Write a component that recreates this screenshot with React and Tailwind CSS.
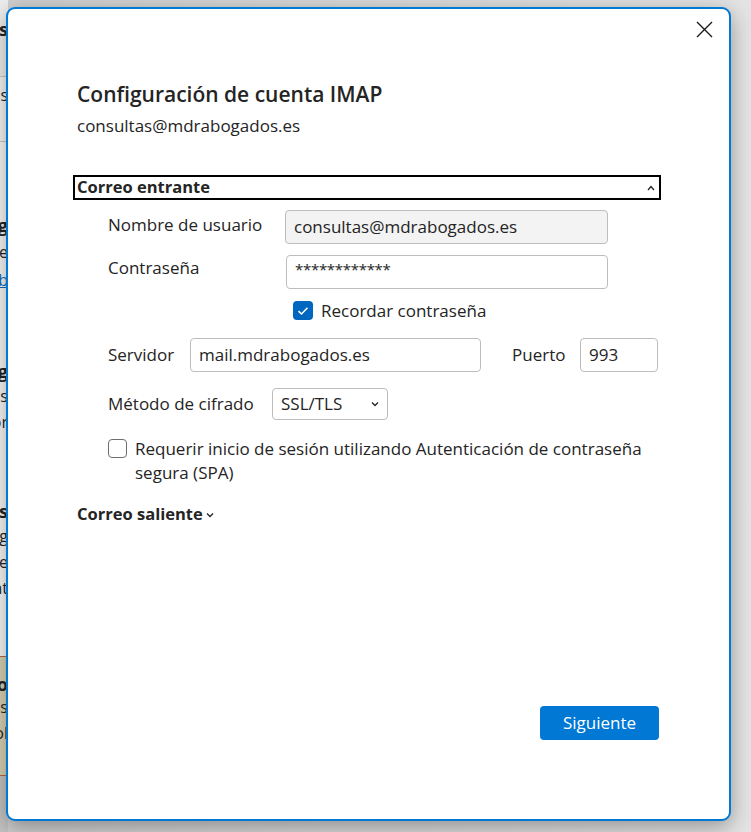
import React from 'react';

const font = { fontFamily: '"Open Sans", "Noto Sans", sans-serif' };

// Thin slice of the window behind the dialog (only its right edge shows)
function Backdrop() {
  const Row = ({ h, children, cls = '' }) => (
    <div className={`flex justify-end overflow-hidden whitespace-nowrap ${h} ${cls}`}>{children}</div>
  );
  return (
    <div className="absolute left-0 top-0 w-[8px] h-[832px] flex flex-col text-[16px] text-[#242424] overflow-hidden" style={font}>
      <div className="bg-[#eeeeee] h-[77px] pt-[16px] border-b border-[#c8c8c8]">
        <Row h="h-[24px]" cls="font-bold text-[18px]">Cuentas</Row>
      </div>
      <div className="bg-[#f5f5f5] h-[65px] pt-[6px] border-b border-[#c8c8c8]">
        <Row h="h-[24px]">Cuentas</Row>
      </div>
      <div className="bg-[#f7f7f7] flex-1 flex flex-col">
        <Row h="h-[24px] mt-[70px]" cls="font-bold text-[18px]">Config</Row>
        <Row h="h-[24px] mt-[4px]">Agregue</Row>
        <Row h="h-[24px] mt-[4px]" cls="text-[#0f6cbd] underline">web</Row>
        <Row h="h-[24px] mt-[66px]" cls="font-bold text-[18px]">Config</Row>
        <Row h="h-[24px] mt-[2px]">visis</Row>
        <Row h="h-[24px] mt-[2px]">ador</Row>
        <Row h="h-[24px] mt-[64px]" cls="font-bold text-[18px]">Cuentas</Row>
        <Row h="h-[24px] mt-[2px]" cls="underline">Config</Row>
        <Row h="h-[24px] mt-[2px]">sece</Row>
        <Row h="h-[24px] mt-[2px]">ant</Row>
      </div>
      <div className="bg-[#d8d2b4] h-[120px] border-t border-b border-[#b86a3c] pt-[14px]">
        <Row h="h-[24px]" cls="font-bold text-[18px]">Info</Row>
        <Row h="h-[26px]">visis</Row>
        <Row h="h-[26px]">sol</Row>
      </div>
      <div className="bg-[#c4c4c4] h-[56px]" />
    </div>
  );
}

function Input({ value, w, gray = false, h = 'h-[34px]' }) {
  return (
    <div className={`${w} ${h} rounded-[4px] border border-[#bdbdbd] flex items-center px-[8px] text-[17px] text-[#242424] ${gray ? 'bg-[#f3f3f3]' : 'bg-white'}`}>
      {value}
    </div>
  );
}

export default function App() {
  return (
    <div className="relative w-[751px] h-[832px] overflow-hidden bg-[linear-gradient(90deg,#cfcfcf,#e4e4e4)]" style={font}>
      <Backdrop />

      {/* dialog */}
      <div className="absolute left-[6px] top-[7px] w-[725px] h-[814px] bg-white border-2 border-[#0078d4] rounded-[9px] shadow-[0_6px_22px_rgba(0,0,0,0.35)] flex flex-col pl-[65px] pr-[68px] pt-[71px] pb-[79px] text-[#242424]">
        <button className="absolute right-[13px] top-[8px] w-[24px] h-[24px] flex items-center justify-center">
          <svg width="17" height="17" viewBox="0 0 17 17" fill="none" stroke="#1a1a1a" strokeWidth="1.4">
            <path d="M1 1L16 16M16 1L1 16" />
          </svg>
        </button>

        <h1 className="ml-[4px] h-[28px] leading-[28px] text-[21px] font-semibold">Configuración de cuenta IMAP</h1>
        <p className="ml-[4px] mt-[6px] h-[24px] leading-[24px] text-[17px]">consultas@mdrabogados.es</p>

        {/* incoming section header */}
        <div className="mt-[37px] h-[25px] border-2 border-black flex items-center justify-between px-[2px]">
          <span className="text-[16.5px] font-bold">Correo entrante</span>
          <svg width="8" height="6" viewBox="0 0 8 6" fill="none" stroke="#242424" strokeWidth="1.3" className="mr-[2px]">
            <path d="M1 5L4 1.5L7 5" />
          </svg>
        </div>

        <div className="ml-[35px] flex flex-col text-[17px]">
          <div className="mt-[10px] flex items-center">
            <span className="w-[177px] -mt-[4px]">Nombre de usuario</span>
            <Input value="consultas@mdrabogados.es" w="w-[323px]" gray />
          </div>
          <div className="mt-[11px] flex items-center">
            <span className="w-[178px] -mt-[9px]">Contraseña</span>
            <Input value={<span className="text-[15px] -mt-[6px] tracking-[-0.3px]">************</span>} w="w-[322px]" />
          </div>
          <div className="mt-[9px] ml-[185px] flex items-center">
            <span className="w-[20px] h-[19px] rounded-[4px] bg-[#0067c0] flex items-center justify-center">
              <svg width="12" height="10" viewBox="0 0 12 10" fill="none" stroke="white" strokeWidth="1.6">
                <path d="M1.5 5.2L4.5 8L10.5 1.8" />
              </svg>
            </span>
            <span className="ml-[8px]">Recordar contraseña</span>
          </div>
          <div className="mt-[14px] flex items-center">
            <span className="w-[82px]">Servidor</span>
            <Input value="mail.mdrabogados.es" w="w-[291px]" />
            <span className="ml-[31px] w-[68px]">Puerto</span>
            <Input value="993" w="w-[78px]" />
          </div>
          <div className="mt-[16px] flex items-center">
            <span className="w-[164px]">Método de cifrado</span>
            <div className="w-[116px] h-[32px] rounded-[4px] border border-[#bdbdbd] flex items-center justify-between pl-[8px] pr-[8px]">
              <span>SSL/TLS</span>
              <svg width="8" height="6" viewBox="0 0 8 6" fill="none" stroke="#242424" strokeWidth="1.3">
                <path d="M1 1.5L4 4.5L7 1.5" />
              </svg>
            </div>
          </div>
          <div className="mt-[17px] flex items-start">
            <span className="mt-[2px] w-[19px] h-[19px] rounded-[4px] border border-[#6e6e6e] bg-white shrink-0" />
            <span className="ml-[8px] leading-[24px] w-[515px]">
              Requerir inicio de sesión utilizando Autenticación de contraseña segura (SPA)
            </span>
          </div>
        </div>

        <div className="ml-[4px] mt-[18px] h-[24px] flex items-center">
          <span className="text-[16.5px] font-bold">Correo saliente</span>
          <svg width="8" height="6" viewBox="0 0 8 6" fill="none" stroke="#242424" strokeWidth="1.3" className="ml-[3px]">
            <path d="M1 1.5L4 4.5L7 1.5" />
          </svg>
        </div>

        <button className="mt-auto self-end mr-[2px] w-[119px] h-[34px] rounded-[4px] bg-[#0078d4] text-white text-[17px]">
          Siguiente
        </button>
      </div>
    </div>
  );
}
